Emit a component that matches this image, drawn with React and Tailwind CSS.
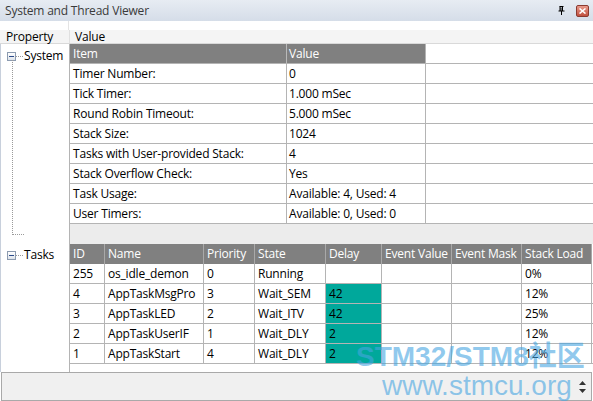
import React from "react";

const sys = [
  ["Timer Number:", "0"],
  ["Tick Timer:", "1.000 mSec"],
  ["Round Robin Timeout:", "5.000 mSec"],
  ["Stack Size:", "1024"],
  ["Tasks with User-provided Stack:", "4"],
  ["Stack Overflow Check:", "Yes"],
  ["Task Usage:", "Available: 4, Used: 4"],
  ["User Timers:", "Available: 0, Used: 0"],
];

const taskCols = [
  ["ID", "w-[35px]"],
  ["Name", "w-[99px]"],
  ["Priority", "w-[51px]"],
  ["State", "w-[71px]"],
  ["Delay", "w-[56px]"],
  ["Event Value", "w-[70px]"],
  ["Event Mask", "w-[70px]"],
  ["Stack Load", "w-[70px]"],
];

const tasks = [
  ["255", "os_idle_demon", "0", "Running", "", "", "", "0%"],
  ["4", "AppTaskMsgPro", "3", "Wait_SEM", "42", "", "", "12%"],
  ["3", "AppTaskLED", "2", "Wait_ITV", "42", "", "", "25%"],
  ["2", "AppTaskUserIF", "1", "Wait_DLY", "2", "", "", "12%"],
  ["1", "AppTaskStart", "4", "Wait_DLY", "2", "", "", "12%"],
];

function TreeBox() {
  return (
    <div className="w-[9px] h-[9px] border border-[#8c9bb0] bg-gradient-to-b from-[#ffffff] to-[#dde3ea] flex items-center justify-center shrink-0">
      <div className="w-[5px] h-[1px] bg-[#2b4a8a]" />
    </div>
  );
}

export default function App() {
  return (
    <div
      className="relative w-[593px] h-[401px] overflow-hidden bg-white text-[12px] leading-none text-black"
      style={{ fontFamily: '"Open Sans", "Noto Sans", sans-serif' }}
    >
      {/* Title bar */}
      <div className="h-[21px] flex items-center justify-between pl-[5px] pr-[4px] bg-gradient-to-b from-[#e7ecf3] to-[#d5dde8] text-[#3a3a3a]">
        <span className="tracking-[-0.2px]">System and Thread Viewer</span>
        <div className="flex items-center gap-[11px]">
          <svg width="7" height="9" viewBox="0 0 7 9">
            <path d="M1.5 0.5h4M2 0.5v4.5M4.5 0.5v4.5M3 1.5v3.5M0.5 5h6M3.5 5v4" stroke="#000" strokeWidth="1" fill="none" />
          </svg>
          <div className="w-[13px] h-[12px] rounded-[2px] border border-[#8a3a30] bg-gradient-to-b from-[#e99a8c] to-[#c0503f] flex items-center justify-center">
            <svg width="7" height="6" viewBox="0 0 7 6">
              <path d="M0.5 0.5l6 5M6.5 0.5l-6 5" stroke="#fff" strokeWidth="1.6" />
            </svg>
          </div>
        </div>
      </div>

      {/* spacer */}
      <div className="h-[9px] flex">
        <div className="w-[69px] border-r border-[#e4e4e4]" />
      </div>

      {/* Property/Value header */}
      <div className="h-[14px] flex bg-[#f4f4f4] border-b border-[#d9d9d9] tracking-[-0.2px]">
        <div className="w-[70px] pl-[6px] border-r border-[#e0e0e0] flex items-center">Property</div>
        <div className="pl-[5px] flex items-center">Value</div>
      </div>

      {/* Body */}
      <div className="h-[328px] flex">
        {/* Tree column */}
        <div className="w-[69px] relative border-l border-[#c8d0dc]">
          <div className="absolute left-[6px] top-[6px] flex items-center">
            <TreeBox />
            <div className="w-[7px] border-t border-dotted border-[#9a9a9a]" />
            <span className="ml-[1px] tracking-[-0.2px]">System</span>
          </div>
          <div className="absolute left-[11px] top-[16px] h-[175px] border-l border-dotted border-[#9a9a9a]" />
          <div className="absolute left-[11px] top-[190px] w-[12px] border-t border-dotted border-[#9a9a9a]" />
          <div className="absolute left-[6px] top-[205px] flex items-center">
            <TreeBox />
            <div className="w-[7px] border-t border-dotted border-[#9a9a9a]" />
            <span className="ml-[1px] tracking-[-0.2px]">Tasks</span>
          </div>
        </div>

        {/* Grid area */}
        <div className="flex-1 border-l border-[#b4b4b4] flex flex-col tracking-[-0.2px]">
          {/* System table header */}
          <div className="h-[20px] flex border-b border-[#b4b4b4]">
            <div className="w-[217px] bg-[#808080] text-white pl-[3px] flex items-center border-r border-[#b9b9b9]">Item</div>
            <div className="w-[139px] bg-[#808080] text-white pl-[2px] flex items-center border-r border-[#b4b4b4]">Value</div>
            <div className="flex-1" />
          </div>
          {sys.map(([a, b]) => (
            <div key={a} className="h-[20px] flex border-b border-[#b4b4b4]">
              <div className="w-[217px] pl-[3px] flex items-center border-r border-[#b4b4b4]">{a}</div>
              <div className="w-[139px] pl-[2px] flex items-center border-r border-[#b4b4b4]">{b}</div>
              <div className="flex-1" />
            </div>
          ))}
          <div className="h-[20px] bg-[#ececec]" />

          {/* Tasks header */}
          <div className="h-[20px] flex">
            {taskCols.map(([t, w]) => (
              <div key={t} className={`${w} bg-[#808080] text-white pl-[3px] flex items-center border-r border-[#a9a9a9] shrink-0`}>
                {t}
              </div>
            ))}
            <div className="flex-1" />
          </div>
          {tasks.map((r) => (
            <div key={r[0]} className="h-[20px] flex border-b border-[#b4b4b4]">
              {r.map((c, i) => (
                <div
                  key={i}
                  className={`${taskCols[i][1]} ${i === 4 && c ? "bg-[#00a89b]" : ""} pl-[3px] flex items-center border-r border-[#b4b4b4] shrink-0`}
                >
                  {c}
                </div>
              ))}
              <div className="flex-1" />
            </div>
          ))}
          <div className="flex-1" />
        </div>
      </div>

      {/* Bottom box */}
      <div className="h-[29px] mx-[1px] border border-[#a9a9a9] bg-[#f0f0f0] flex items-center justify-end pr-[5px]">
        <div className="flex flex-col items-center gap-[4px]">
          <svg width="7" height="4" viewBox="0 0 7 4"><path d="M3.5 0L7 4H0z" fill="#333" /></svg>
          <svg width="7" height="4" viewBox="0 0 7 4"><path d="M0 0h7L3.5 4z" fill="#333" /></svg>
        </div>
      </div>

      {/* Watermark */}
      <div
        className="absolute left-[356px] top-[343px] pointer-events-none text-[rgba(70,165,225,0.6)] leading-none"
        style={{ fontFamily: '"Liberation Sans", "Noto Sans CJK SC", sans-serif' }}
      >
        <div className="text-[28px] font-bold">STM32/STM8社区</div>
        <div className="text-[28px] ml-[26px] mt-[1px]">www.stmcu.org</div>
      </div>
    </div>
  );
}
